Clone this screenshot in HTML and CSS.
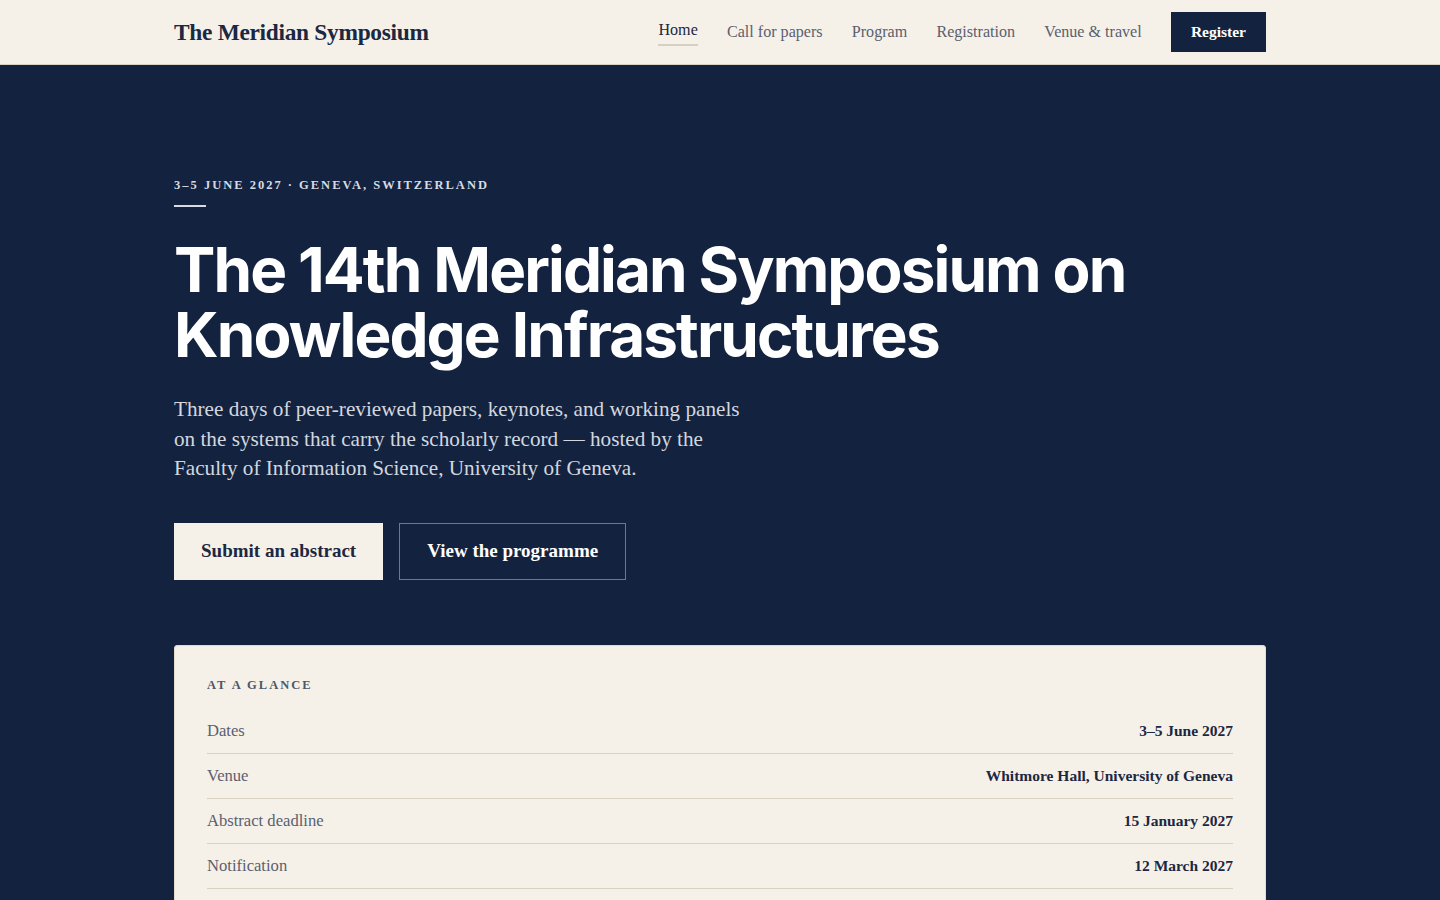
FILE: index.html
```html
<!DOCTYPE html>
<html lang="en">
<head>
<meta charset="utf-8">
<title>The Meridian Symposium</title>
<link rel="stylesheet" href="styles.css">
</head>
<body>
<header class="topbar">
  <div class="container topbar-inner">
    <a class="brand" href="#">The Meridian Symposium</a>
    <nav class="nav">
      <a class="nav-link active" href="#">Home</a>
      <a class="nav-link" href="#">Call for papers</a>
      <a class="nav-link" href="#">Program</a>
      <a class="nav-link" href="#">Registration</a>
      <a class="nav-link" href="#">Venue &amp; travel</a>
      <a class="nav-cta" href="#">Register</a>
    </nav>
  </div>
</header>
<main class="hero">
  <div class="container">
    <p class="eyebrow">3–5 June 2027 · Geneva, Switzerland</p>
    <div class="eyebrow-rule"></div>
    <h1 class="title">The 14th Meridian Symposium on Knowledge Infrastructures</h1>
    <p class="lede">Three days of peer-reviewed papers, keynotes, and working panels on the systems that carry the scholarly record — hosted by the Faculty of Information Science, University of Geneva.</p>
    <div class="actions">
      <a class="btn btn-light" href="#">Submit an abstract</a>
      <a class="btn btn-outline" href="#">View the programme</a>
    </div>
    <section class="glance">
      <h2 class="glance-title">At a glance</h2>
      <dl class="glance-list">
        <div class="glance-row"><dt>Dates</dt><dd>3–5 June 2027</dd></div>
        <div class="glance-row"><dt>Venue</dt><dd>Whitmore Hall, University of Geneva</dd></div>
        <div class="glance-row"><dt>Abstract deadline</dt><dd>15 January 2027</dd></div>
        <div class="glance-row"><dt>Notification</dt><dd>12 March 2027</dd></div>
        <div class="glance-row"><dt>Registration closes</dt><dd>30 April 2027</dd></div>
      </dl>
    </section>
  </div>
</main>
</body>
</html>
```
FILE: styles.css
```css
* { box-sizing: border-box; }
html, body { margin: 0; padding: 0; }
body {
  background: #13233f;
  font-family: "Liberation Serif", "Times New Roman", serif;
  color: #13233f;
}
a { text-decoration: none; color: inherit; }
.container {
  max-width: 1140px;
  margin: 0 auto;
  padding: 0 24px;
}
.topbar {
  background: #f6f1e8;
  border-bottom: 1px solid #d9d2c4;
  height: 65px;
}
.topbar-inner {
  height: 64px;
  display: flex;
  align-items: center;
  justify-content: space-between;
}
.brand {
  font-size: 23.4px;
  font-weight: 700;
  color: #1b2842;
  letter-spacing: -0.3px;
}
.nav {
  display: flex;
  align-items: center;
  gap: 29.2px;
}
.nav-link {
  font-size: 16.1px;
  color: #5a6070;
  padding: 4px 0;
}
.nav-link.active {
  color: #1b2842;
  border-bottom: 2px solid #d6cfc2;
  padding-bottom: 5px;
  margin-bottom: -4px;
  position: relative;
  top: -3px;
}
.nav-cta {
  background: #13233f;
  color: #ffffff;
  font-weight: 700;
  font-size: 15.5px;
  height: 40px;
  padding: 0 20px;
  display: flex;
  align-items: center;
}
.hero { padding-top: 112px; padding-bottom: 60px; }
.eyebrow {
  margin: 0;
  font-size: 12.5px;
  font-weight: 700;
  letter-spacing: 2px;
  text-transform: uppercase;
  color: #d8dbe2;
  line-height: 16px;
}
.eyebrow-rule {
  width: 32px;
  height: 2px;
  background: #d8dbe2;
  margin-top: 12px;
}
.title {
  margin: 30px 0 0;
  font-family: Inter, "Noto Sans", sans-serif;
  font-weight: 700;
  font-size: 62px;
  line-height: 65px;
  letter-spacing: -1.9px;
  color: #ffffff;
  max-width: 1000px;
}
.lede {
  margin: 28px 0 0;
  font-size: 21.2px;
  line-height: 29.5px;
  color: #d3d7df;
  max-width: 590px;
}
.actions {
  display: flex;
  gap: 16px;
  margin-top: 39px;
}
.btn {
  display: flex;
  align-items: center;
  justify-content: center;
  height: 57px;
  padding: 0 27px;
  font-size: 19px;
  font-weight: 700;
}
.btn-light {
  background: #f6f1e8;
  color: #1b2842;
}
.btn-outline {
  border: 1px solid #6a7894;
  color: #ffffff;
}
.glance {
  margin-top: 65px;
  background: #f6f1e8;
  border: 1px solid #e3dccd;
  border-radius: 3px;
  padding: 30px 32px 20px;
}
.glance-title {
  margin: 0 0 15px;
  font-size: 12.5px;
  font-weight: 700;
  letter-spacing: 2px;
  text-transform: uppercase;
  color: #4f5668;
  line-height: 18px;
}
.glance-list { margin: 0; }
.glance-row {
  display: flex;
  justify-content: space-between;
  align-items: center;
  height: 45px;
  border-bottom: 1px solid #d8d0c2;
}
.glance-row dt {
  font-size: 16.6px;
  color: #5a6070;
}
.glance-row dd {
  margin: 0;
  font-size: 15.5px;
  font-weight: 700;
  color: #1b2842;
}
```
